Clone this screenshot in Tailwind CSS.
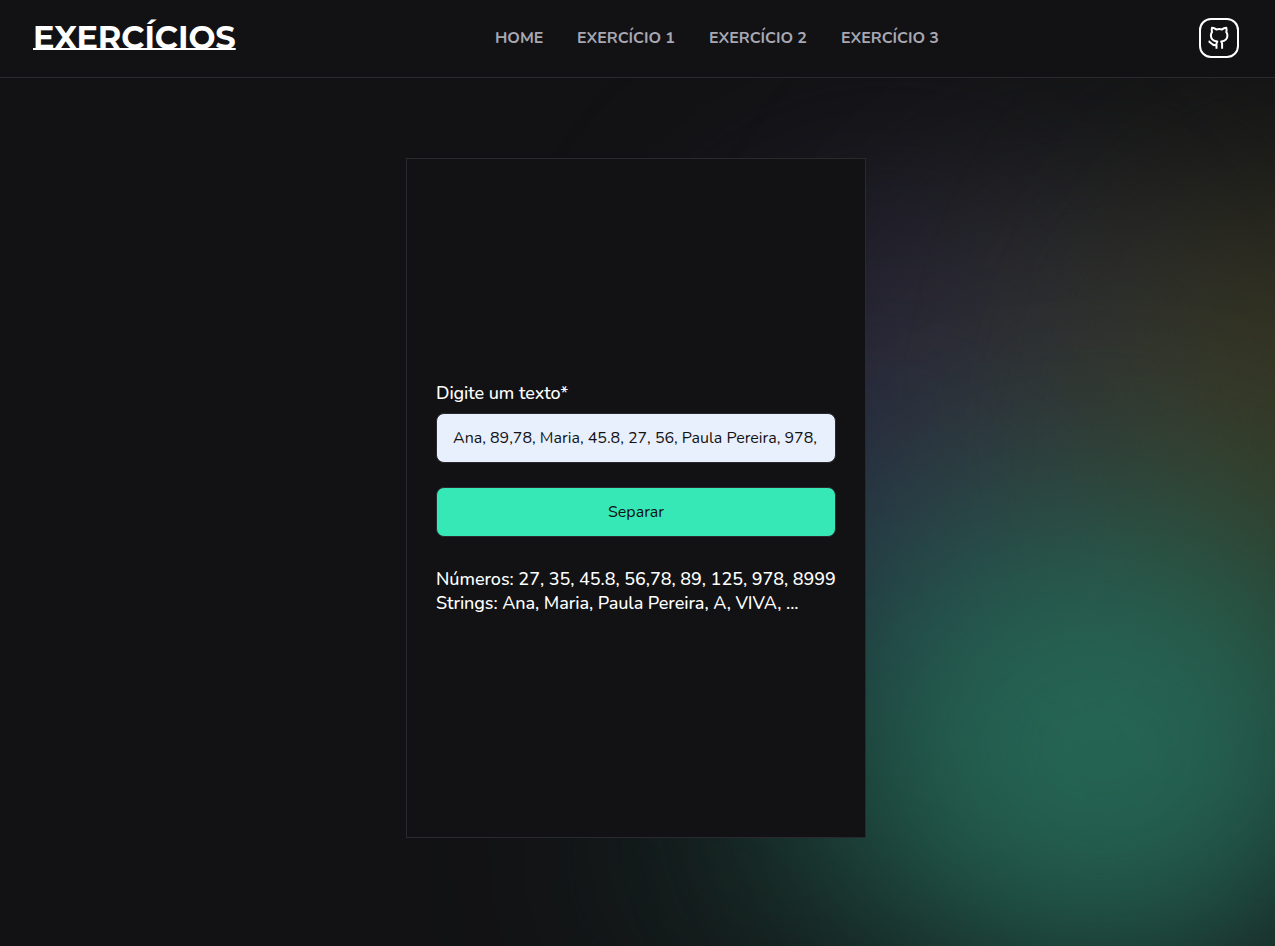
<!DOCTYPE html>
<html lang="pt-BR">
<head>
<meta charset="utf-8">
<title>Exercícios</title>
<script src="https://cdn.jsdelivr.net/npm/@tailwindcss/browser@4"></script>
</head>
<body class="h-[946px] overflow-hidden bg-[#121214] font-[Nunito,Lato,sans-serif] text-white">
<div class="relative isolate flex h-full flex-col">
  <!-- Soft colour glow behind the page -->
  <svg class="absolute inset-0 -z-10" width="1275" height="946" viewBox="0 0 1275 946" aria-hidden="true">
    <defs>
      <filter id="soft" x="-100%" y="-100%" width="300%" height="300%" color-interpolation-filters="sRGB"><feGaussianBlur stdDeviation="105"/></filter>
    </defs>
    <ellipse cx="890" cy="430" rx="190" ry="230" fill="#3a3258" opacity=".56" filter="url(#soft)"/>
    <ellipse cx="1090" cy="400" rx="200" ry="220" fill="#3c403e" opacity=".6" filter="url(#soft)"/>
    <ellipse cx="1320" cy="440" rx="200" ry="250" fill="#4c4b29" opacity=".58" filter="url(#soft)"/>
    <ellipse cx="870" cy="590" rx="130" ry="140" fill="#26596a" opacity=".34" filter="url(#soft)"/>
    <ellipse cx="790" cy="850" rx="170" ry="120" fill="#1c4a3e" opacity=".4" filter="url(#soft)"/>
    <ellipse cx="1100" cy="745" rx="275" ry="245" fill="#28725e" opacity=".86" filter="url(#soft)"/>
  </svg>

  <header class="flex h-[78px] shrink-0 items-center justify-between border-b border-[#29292e] bg-[#121214] pr-9 pl-[33px] pb-0.5">
    <a class="w-[203px] font-[Montserrat,Lato,sans-serif] text-[32px] leading-10 font-bold tracking-[-0.05px] whitespace-nowrap underline decoration-2 -underline-offset-1 [text-decoration-skip-ink:none]">EXERCÍCIOS</a>
    <nav class="flex gap-[33px] text-base font-bold whitespace-nowrap text-[#a8a8b3]">
      <a class="w-[49px]">HOME</a>
      <a class="w-[99px]">EXERCÍCIO 1</a>
      <a class="w-[99px]">EXERCÍCIO 2</a>
      <a class="w-[99px]">EXERCÍCIO 3</a>
    </nav>
    <a class="flex size-10 items-center justify-center rounded-xl border-2 border-white">
      <svg width="24" height="24" viewBox="0 0 24 24" fill="none" stroke="currentColor" stroke-width="2" stroke-linejoin="round"><path d="M9.500 22.800v-5c0-1 .2-1.600.8-2.300C6.200 15 3.900 13.200 3.900 9.400c0-1.300.4-2.400 1.100-3.300-.4-1.300-.4-2.800 0-4.300C6.700 1.900 8.100 2.500 9.300 3.400c1.800-.4 3.900-.4 5.700 0 1.200-.9 2.600-1.500 4.300-1.600.4 1.500.4 3 0 4.300.7.900 1.100 2 1.100 3.300 0 3.800-2.300 5.600-6.200 6.100.6.700.9 1.300.9 2.300v5M1.600 15.300c2.500.7 2.500 4.600 7.900 4"/></svg>
    </a>
  </header>

  <main class="flex justify-center pt-20 pr-[3px]">
    <section class="flex h-[680px] w-[460px] flex-col justify-center border border-[#29292e] bg-[#121214] px-[29px]">
      <label class="text-lg leading-6 font-medium tracking-[-0.07px]">Digite um texto*</label>
      <div class="mt-2 flex h-[50px] items-center overflow-hidden rounded-lg border border-[#29292e] bg-[#e8f0fe] px-4 text-base whitespace-nowrap text-[#121214]">Ana, 89,78, Maria, 45.8, 27, 56, Paula Pereira, 978,</div>
      <button class="mt-6 h-[50px] rounded-lg border border-[#29292e] bg-[#36e8b5] text-base text-[#121214]">Separar</button>
      <div class="mt-[30px] text-lg leading-6 font-medium whitespace-nowrap">
        <p class="tracking-[-0.04px]">Números: 27, 35, 45.8, 56,78, 89, 125, 978, 8999</p>
        <p class="tracking-[-0.07px]">Strings: Ana, Maria, Paula Pereira, A, VIVA, ...</p>
      </div>
    </section>
  </main>
</div>
</body>
</html>
